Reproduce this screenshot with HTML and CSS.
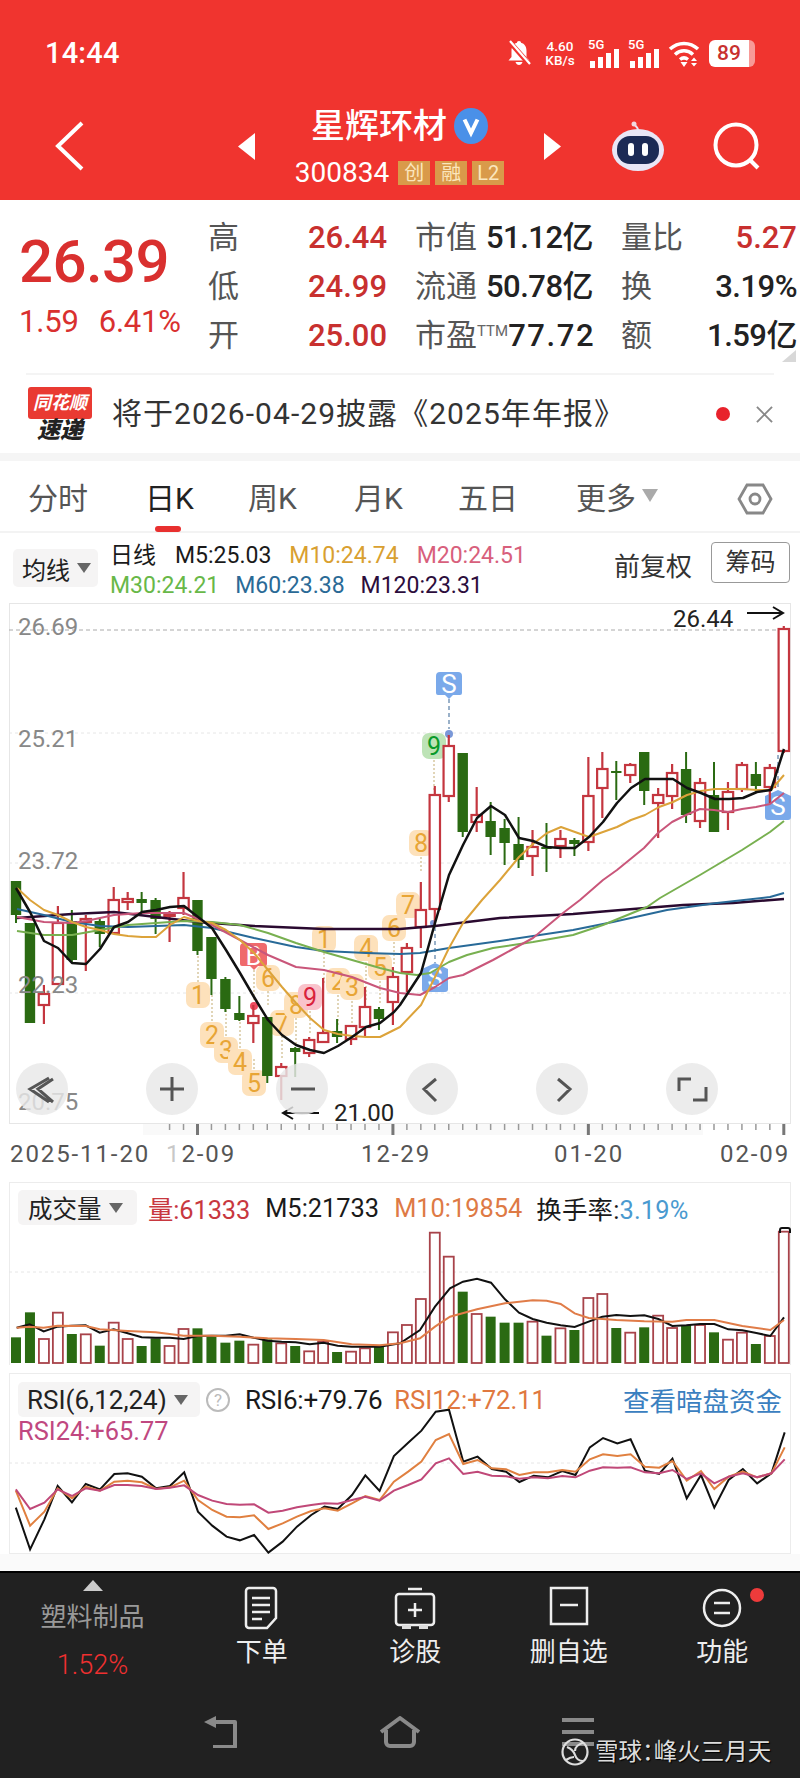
FILE: index.html
```html
<!DOCTYPE html>
<html lang="zh-CN">
<head>
<meta charset="utf-8">
<title>星辉环材</title>
<link rel="stylesheet" href="styles.css">
</head>
<body>
<div class="page">
  <header class="hdr">
    <div class="status">
      <span class="clock">14:44</span>
      <div class="sicons">
        <svg class="i-bell" viewBox="0 0 24 26"><path class="wf" d="M12 1c1.400 0 2 .8 2 1.700 3.800 1 5.500 4 5.500 8V17l3 3.500H1.500L4.500 17v-6.300c0-4 1.700-7 5.500-8C10 1.800 10.600 1 12 1z"/><path class="wf" d="M8.500 22h7c-.5 2-2 3-3.500 3s-3-1-3.500-3z"/><path class="rs" d="M1 0 23 25"/><path class="rs2" d="M3 1 23 24"/></svg>
        <div class="speed"><b>4.60</b><b>KB/s</b></div>
        <svg class="i-sig" viewBox="0 -3 32 30"><text class="g5" x="0" y="8">5G</text><path class="wf" d="M2 20h5v7H2zM10 16h5v11h-5zM18 12h5v15h-5zM26 8h5v19h-5z"/></svg>
        <svg class="i-sig" viewBox="0 -3 32 30"><text class="g5" x="0" y="8">5G</text><path class="wf" d="M2 20h5v7H2zM10 16h5v11h-5zM18 12h5v15h-5zM26 8h5v19h-5z"/></svg>
        <svg class="i-wifi" viewBox="0 0 32 27"><path class="ws" d="M2 9c8-7.500 20-7.500 28 0M7 14.500c5.500-5 12.500-5 18 0M12 19.500c2.500-2 5.500-2 8 0"/><path class="wf" d="M12.500 22h7L16 27zM23 21l3-3.500 3 3.500zM23 23h6l-3 3.500z"/></svg>
        <div class="batt"><span>89</span></div>
      </div>
    </div>
    <div class="nav">
      <svg class="i-back" viewBox="0 0 30 50"><path class="wl" d="M27 2 3 25l24 23"/></svg>
      <div class="titlebox">
        <svg class="tri" viewBox="0 0 17 27"><path class="wf" d="M17 0v27L0 13.500z"/></svg>
        <div class="titlecol">
          <div class="tline"><span class="tname">星辉环材</span>
            <svg class="vb" viewBox="0 0 34 36"><ellipse class="vbg" cx="17" cy="18" rx="17" ry="18"/><path class="vv" d="M10.500 11.500 17 25l6.500-13.500"/></svg>
          </div>
          <div class="cline"><span class="code">300834</span><span class="tag">创</span><span class="tag">融</span><span class="tag">L2</span></div>
        </div>
        <svg class="tri" viewBox="0 0 17 27"><path class="wf" d="M0 0v27l17-13.500z"/></svg>
      </div>
      <svg class="i-robot" viewBox="0 0 54 50">
        <path class="ant" d="M27 9c0-3-2-3-3-5"/><circle class="antd" cx="23" cy="3" r="2.500"/>
        <ellipse class="rhead" cx="27" cy="29" rx="26" ry="21"/>
        <rect class="rface" x="6" y="15" width="42" height="28" rx="13"/>
        <rect class="reye" x="17" y="22" width="6" height="13" rx="3"/>
        <rect class="reye" x="31" y="22" width="6" height="13" rx="3"/>
      </svg>
      <svg class="i-search" viewBox="0 0 48 48"><circle class="ss" cx="23" cy="23" r="20.500"/><path class="ss" d="M37 38l8 8"/></svg>
    </div>
  </header>

  <section class="quote">
    <div class="pricebox">
      <div class="price">26.39</div>
      <div class="chg"><span>1.59</span><span>6.41%</span></div>
    </div>
    <div class="stats">
      <div class="cell"><span class="lb">高</span><span class="red">26.44</span></div>
      <div class="cell"><span class="lb">市值</span><span class="blk">51.12亿</span></div>
      <div class="cell"><span class="lb">量比</span><span class="red">5.27</span></div>
      <div class="cell"><span class="lb">低</span><span class="red">24.99</span></div>
      <div class="cell"><span class="lb">流通</span><span class="blk">50.78亿</span></div>
      <div class="cell"><span class="lb">换</span><span class="blk">3.19%</span></div>
      <div class="cell"><span class="lb">开</span><span class="red">25.00</span></div>
      <div class="cell"><span class="lb">市盈<sup class="ttm">TTM</sup></span><span class="blk wide">77.72</span></div>
      <div class="cell"><span class="lb">额</span><span class="blk">1.59亿</span></div>
    </div>
    <div class="corner"></div>
  </section>

  <section class="banner">
    <div class="logo"><div class="lflag">同花顺</div><div class="lsub">速递</div></div>
    <div class="btext">将于2026-04-29披露《2025年年报》</div>
    <span class="rdot"></span>
    <svg class="bx" viewBox="0 0 18 18"><path class="xl" d="M1 1l16 16M17 1 1 17"/></svg>
  </section>

  <nav class="tabs">
    <span class="tab">分时</span>
    <span class="tab on">日K</span>
    <span class="tab">周K</span>
    <span class="tab">月K</span>
    <span class="tab">五日</span>
    <span class="tab">更多<i class="caret big"></i></span>
    <svg class="hex" viewBox="0 0 36 32"><path class="hs" d="M10 2h16l8 14-8 14H10L2 16z"/><circle class="hs" cx="18" cy="16" r="5"/></svg>
  </nav>

  <section class="legend">
    <div class="chip mchip">均线<i class="caret"></i></div>
    <div class="marows">
      <div class="marow"><span class="dk">日线</span><span class="dk m5">M5:25.03</span><span class="c10">M10:24.74</span><span class="c20">M20:24.51</span></div>
      <div class="marow tight"><span class="c30">M30:24.21</span><span class="c60">M60:23.38</span><span class="c120">M120:23.31</span></div>
    </div>
    <div class="fq">前复权</div>
    <div class="cm">筹码</div>
  </section>

  <svg class="kchart" viewBox="0 600 800 572">
    <rect class="tickband" x="143" y="1123" width="560" height="12"/>
    <rect class="frame" x="9.500" y="603.500" width="781" height="520"/>
    <path class="grid0" d="M9 630H791"/>
    <path class="grid1" d="M9 733H791M9 863H791M9 993H791"/>
    <g id="badges"></g>
    <g class="dots"><path d="M254 970v36M198 982v-28M212 1021v-26M226 1036v-28M240 1048v-26M254 1069v-10M268 991v14M282 1036v24M296 1018v28M310 1011v24M324 953v30M338 995v32M352 1001v24M366 962v40M380 981v24M394 942v22M421 857v14M434 760v32"/></g>
    <g class="sbadge">
      <path class="bb" d="M240 947a4 4 0 0 1 4-4h19a4 4 0 0 1 4 4v17a2 2 0 0 1-2 2h-7l-4 4-4-4h-8a2 2 0 0 1-2-2z"/>
      <text class="bt" x="253.500" y="965">B</text>
      <path class="sb" d="M436 676a4 4 0 0 1 4-4h18a4 4 0 0 1 4 4v17a2 2 0 0 1-2 2h-7l-4 4-4-4h-7a2 2 0 0 1-2-2z"/>
      <text class="st" x="449" y="693">S</text>
      <path class="dl" d="M449 699v30"/><circle class="sdot" cx="449" cy="734" r="4"/>
      <path class="dl" d="M435 927v36"/><circle class="sdot" cx="433" cy="923" r="3"/>
      <path class="sb" d="M422 969l13-6 13 6v20a3 3 0 0 1-3 3h-20a3 3 0 0 1-3-3z"/>
      <text class="st" x="435" y="987">S</text>
      <path class="dl" d="M778 755v34"/>
      <path class="sb" d="M765 796l13-6 13 6v21a3 3 0 0 1-3 3h-20a3 3 0 0 1-3-3z"/>
      <text class="st" x="778" y="815">S</text>
      <circle class="rsd" cx="254" cy="1006" r="4"/>
    </g>
    <g id="candles"></g>
    <g id="malines"></g>
    <g class="ylab">
      <text x="18" y="635">26.69</text>
      <text x="18" y="747">25.21</text>
      <text x="18" y="869">23.72</text>
      <text x="18" y="993">22.23</text>
      <text x="18" y="1110">20.75</text>
    </g>
    <text class="pk" x="673" y="627">26.44</text>
    <path class="arr" d="M747 613h36m-10-6 10 6-10 6"/>
    <text class="pk" x="334" y="1121">21.00</text>
    <path class="arr" d="M319 1113h-36m10-6-10 6 10 6"/>
    <g class="btn">
      <circle cx="42" cy="1089" r="26"/><circle cx="172" cy="1089" r="26"/><circle cx="302" cy="1089" r="26"/>
      <circle cx="432" cy="1089" r="26"/><circle cx="562" cy="1089" r="26"/><circle cx="692" cy="1089" r="26"/>
    </g>
    <path class="bi" d="M49 1078l-19 11 19 13M53 1079l-15 10 15 13M160 1089h24M172 1077v24M291 1089h24M436 1079l-12 10 12 12M558 1079l12 10-12 12M679 1091v-12h12M706 1087v13h-13"/>
    <g id="ticks"></g>
    <g class="xlab">
      <text x="10" y="1162">2025-11-20</text>
      <text x="166" y="1162"><tspan class="pale">1</tspan>2-09</text>
      <text x="361" y="1162">12-29</text>
      <text x="554" y="1162">01-20</text>
      <text x="720" y="1162">02-09</text>
    </g>
  </svg>

  <section class="panel vol">
    <svg class="pchart" viewBox="9 1182 782 183">
      <path class="grid1" d="M9 1272H791"/>
      <g id="vols"></g>
      <g id="vollines"></g>
      <path class="topcap" d="M780 1233v-3a2 2 0 0 1 2-2h6a2 2 0 0 1 2 2v3"/>
    </svg>
    <div class="phead">
      <div class="chip vchip">成交量<i class="caret"></i></div>
      <span class="v1">量:61333</span><span class="dk v2">M5:21733</span><span class="v3">M10:19854</span><span class="dk v4">换手率:<em>3.19%</em></span>
    </div>
  </section>

  <section class="panel rsi">
    <svg class="pchart" viewBox="9 1373 782 181">
      <path class="grid1" d="M9 1463H791"/>
      <g id="rsilines"></g>
    </svg>
    <div class="phead rhead">
      <div class="chip rchip">RSI(6,12,24)<i class="caret"></i></div>
      <span class="qm">?</span>
      <span class="dk r1">RSI6:+79.76</span><span class="r2">RSI12:+72.11</span>
      <span class="rlink">查看暗盘资金</span>
    </div>
    <div class="r3">RSI24:+65.77</div>
  </section>

  <div class="filler"></div>

  <footer class="foot">
    <div class="tools">
      <div class="tool first">
        <i class="uptri"></i>
        <span class="sect">塑料制品</span>
        <span class="pct">1.52%</span>
      </div>
      <div class="tool">
        <svg class="ti" viewBox="0 0 44 44"><path class="tl" d="M9 2h24a3 3 0 0 1 3 3v27l-9 10H9a3 3 0 0 1-3-3V5a3 3 0 0 1 3-3zM12 12h18M12 19h18M12 26h18M12 33h10"/></svg>
        <span class="tlabel">下单</span>
      </div>
      <div class="tool">
        <svg class="ti" viewBox="0 0 44 44"><path class="tl" d="M15 3h14M6 8h32a3 3 0 0 1 3 3v25a3 3 0 0 1-3 3H6a3 3 0 0 1-3-3V11a3 3 0 0 1 3-3zM22 17v14M15 24h14"/><path class="tf" d="M9 39h9v4H9zM26 39h9v4h-9z"/></svg>
        <span class="tlabel">诊股</span>
      </div>
      <div class="tool">
        <svg class="ti" viewBox="0 0 44 44"><path class="tl" d="M4 2h36v36H4zM13 19h18"/></svg>
        <span class="tlabel">删自选</span>
      </div>
      <div class="tool fn">
        <svg class="ti" viewBox="0 0 44 44"><circle class="tl" cx="22" cy="22" r="18"/><path class="tl" d="M14 17h16M14 27h16"/></svg>
        <i class="fdot"></i>
        <span class="tlabel">功能</span>
      </div>
    </div>
    <div class="sysnav">
      <svg class="sn1" viewBox="0 0 36 32"><path class="sl" d="M4 6h27v25H9"/><path class="sf" d="M0 6 12 0v12z"/></svg>
      <svg class="sn2" viewBox="0 0 42 32"><path class="sl" d="M2 16 21 2l19 14M7 14v12a4 4 0 0 0 4 4h20a4 4 0 0 0 4-4V14"/></svg>
      <svg class="sn3" viewBox="0 0 34 28"><path class="sl" d="M1 2h32M1 14h32M1 26h32"/></svg>
    </div>
    <div class="wm">
      <svg class="wmi" viewBox="0 0 28 28"><circle class="wc" cx="14" cy="14" r="12.500"/><path class="wc" d="M6 9c5 2 7 5 8 8s3 6 8 6M22 5c-4 1-8 4-8 8M5 22c3-2 6-3 8-3"/></svg>
      <span>雪球：峰火三月天</span>
    </div>
  </footer>
</div>
<script src="chart.js"></script>
</body>
</html>
```

FILE: styles.css
```css
* { box-sizing: border-box; }
html, body { margin: 0; padding: 0; background: #fff; }
body { font-family: Roboto, "Noto Sans CJK SC", sans-serif; color: #222; }
.page { width: 800px; height: 1778px; display: flex; flex-direction: column; overflow: hidden; }
svg { display: block; flex: none; }

/* header */
.hdr { height: 200px; flex: none; background: #f0342f; color: #fff; padding-top: 36px; }
.status { height: 34px; padding: 0 45px; display: flex; justify-content: space-between; align-items: center; }
.clock { font-size: 29px; font-weight: 500; letter-spacing: .2px; }
.sicons { display: flex; align-items: center; }
.i-bell { width: 24px; height: 26px; margin-right: 11px; }
.wf { fill: #fff; }
.rs { stroke: #f0342f; stroke-width: 5px; }
.rs2 { stroke: #fff; stroke-width: 2.200px; }
.speed { width: 36px; display: flex; flex-direction: column; font-size: 13.500px; line-height: 14px; margin-right: 10px; text-align: center; }
.speed b { font-weight: 500; }
.i-sig { width: 32px; height: 30px; margin-right: 8px; }
.g5 { fill: #fff; font-size: 13px; font-weight: 500; }
.i-wifi { width: 32px; height: 27px; margin-right: 9px; }
.ws { fill: none; stroke: #fff; stroke-width: 3.500px; }
.batt { width: 46px; height: 27px; background: linear-gradient(90deg, #fff 0 40px, rgba(255,255,255,.5) 40px); border-radius: 6px; color: #c8302f; font-size: 21px; font-weight: 500; line-height: 27px; padding-left: 8px; }
.nav { height: 80px; margin-top: 36px; display: flex; align-items: center; }
.i-back { width: 30px; height: 50px; margin-left: 55px; }
.wl { fill: none; stroke: #fff; stroke-width: 4px; }
.titlebox { width: 323px; margin-left: 153px; display: flex; align-items: center; justify-content: space-between; }
.tri { width: 17px; height: 27px; }
.titlecol { display: flex; flex-direction: column; align-items: center; }
.tline { height: 40px; display: flex; align-items: center; gap: 7px; }
.tname { font-size: 34px; line-height: 40px; font-weight: 500; }
.vb { width: 34px; height: 36px; }
.vbg { fill: #4a90e8; }
.vv { fill: none; stroke: #fff; stroke-width: 4px; }
.cline { height: 28px; margin-top: 13px; display: flex; align-items: center; }
.code { font-size: 28px; line-height: 28px; margin-right: 9px; }
.tag { width: 32px; height: 24px; margin-right: 5px; background: #d99a4a; color: #fbe6bd; font-size: 20px; line-height: 24px; text-align: center; }
.tag:last-child { margin-right: 0; }
.i-robot { width: 54px; height: 50px; margin-left: 50px; }
.ant { fill: none; stroke: #e8e4f4; stroke-width: 2px; }
.antd { fill: #f2d8e0; }
.rhead { fill: #e9e6f6; }
.rface { fill: #1c2a55; }
.reye { fill: #fff; }
.i-search { width: 48px; height: 48px; margin-left: 48px; }
.ss { fill: none; stroke: #fff; stroke-width: 4px; }

/* quote */
.quote { height: 173px; flex: none; display: flex; position: relative; }
.pricebox { width: 208px; padding: 27px 0 0 19px; }
.price { font-size: 60px; line-height: 70px; font-weight: 500; color: #d9302f; letter-spacing: -.6px; }
.chg { display: flex; gap: 20px; margin-top: 7px; font-size: 31px; line-height: 36px; color: #d9302f; letter-spacing: -.2px; }
.stats { width: 590px; padding-top: 13px; display: grid; grid-template-columns: 179px 178px 176px; column-gap: 28px; grid-auto-rows: 49px; }
.cell { display: flex; justify-content: space-between; align-items: center; font-size: 31px; line-height: 49px; }
.lb { color: #555; white-space: nowrap; }
.red { color: #c8302f; font-weight: 500; }
.blk { color: #222; font-weight: 500; letter-spacing: -.5px; }
.blk.wide { letter-spacing: 1.600px; }
.ttm { font-size: 15px; line-height: 0; vertical-align: 10px; color: #666; }
.corner { position: absolute; right: 4px; top: 150px; width: 0; height: 0; border-left: 14px solid transparent; border-bottom: 12px solid #d8d8d8; }

/* banner */
.banner { height: 80px; flex: none; margin: 0 26px; border-top: 2px solid #f4f4f4; display: flex; align-items: center; padding-left: 2px; }
.logo { width: 64px; height: 54px; flex: none; }
.lflag { height: 32px; background: #e93a32; border-radius: 3px; color: #fff; font-size: 18px; font-weight: 700; font-style: italic; text-align: center; line-height: 31px; }
.lsub { font-size: 23px; font-weight: 900; font-style: italic; line-height: 24px; text-align: center; color: #222; }
.btext { margin-left: 20px; font-size: 30px; line-height: 40px; color: #333; letter-spacing: 1.050px; flex: 1; white-space: nowrap; }
.rdot { width: 14px; height: 14px; border-radius: 50%; background: #e8222c; }
.bx { width: 17px; height: 17px; margin: 0 1px 0 26px; }
.xl { stroke: #888; stroke-width: 2px; fill: none; }

/* tabs */
.tabs { height: 80px; flex: none; border-top: 8px solid #f5f5f5; border-bottom: 2px solid #f3f3f3; padding: 5px 0 0 28px; display: grid; grid-template-columns: 117px 103px 106px 104px 118px 161px 40px; align-items: center; font-size: 30px; color: #555; }
.tab { white-space: nowrap; position: relative; line-height: 40px; }
.tab.on { color: #222; }
.tab.on::after { content: ""; position: absolute; left: 10px; top: 47px; width: 26px; height: 6px; border-radius: 3px; background: #e8302f; }
.caret { display: inline-block; width: 0; height: 0; border-left: 7px solid transparent; border-right: 7px solid transparent; border-top: 10px solid #666; margin-left: 7px; vertical-align: 4px; }
.caret.big { border-left-width: 8px; border-right-width: 8px; border-top-width: 13px; border-top-color: #aaa; margin-left: 6px; vertical-align: 7px; }
.hex { width: 36px; height: 32px; }
.hs { fill: none; stroke: #888; stroke-width: 2.800px; }

/* legend */
.legend { height: 67px; flex: none; display: flex; align-items: flex-start; padding-left: 13px; }
.chip { background: #f5f4f4; border-radius: 5px; display: flex; align-items: center; color: #222; white-space: nowrap; }
.mchip { width: 85px; height: 38px; margin-top: 16px; padding-left: 9px; font-size: 24px; }
.marows { margin: 8px 0 0 12px; width: 504px; }
.marow { display: flex; gap: 18px; height: 29.500px; line-height: 29.500px; font-size: 23px; white-space: nowrap; }
.marow.tight { gap: 16px; }
.m5 { margin-left: 1px; }
.dk { color: #1a1a1a; }
.c10 { color: #d9a030; }
.c20 { color: #d8607c; }
.c30 { color: #68b848; }
.c60 { color: #2a6a96; }
.c120 { color: #2c0d3c; }
.fq { width: 97px; margin-top: 16px; font-size: 26px; line-height: 36px; color: #333; }
.cm { width: 79px; height: 41px; margin-top: 9px; border: 1px solid #999; border-radius: 4px; font-size: 25px; line-height: 39px; text-align: center; color: #333; }

/* K chart */
.kchart { width: 800px; height: 572px; }
.frame { fill: none; stroke: #e6e6e6; }
.tickband { fill: #f9f9f9; }
.grid0 { stroke: #aaa; stroke-width: 1px; stroke-dasharray: 4 3; fill: none; }
.grid1 { stroke: #e6e6e6; stroke-width: 1px; stroke-dasharray: 3 3; fill: none; }
.dots path { stroke: #d8c8a0; stroke-width: 1.500px; stroke-dasharray: 2 2; fill: none; }
.td { fill: #fde1bb; }
.tdt { fill: #e8a535; font-size: 25px; text-anchor: middle; }
.td9 { fill: #f9c3cb; }
.td9t { fill: #d9223c; font-size: 25px; text-anchor: middle; }
.tdg { fill: #bde3b6; }
.tdgt { fill: #0a9a2a; font-size: 25px; text-anchor: middle; }
.bb { fill: #ef6a6c; }
.bt { fill: #fff; font-size: 26px; text-anchor: middle; }
.sb { fill: #7aa9ea; }
.st { fill: #fff; font-size: 26px; text-anchor: middle; }
.dl { stroke: #7a98b8; stroke-width: 1.500px; stroke-dasharray: 4 3; fill: none; }
.sdot { fill: #7a98d8; }
.rsd { fill: #ee4a60; }
.wk-r { stroke: #c4363f; stroke-width: 2.200px; }
.wk-g { stroke: #2a6a12; stroke-width: 2px; }
.bd-r { fill: #fff; stroke: #c4363f; stroke-width: 2.200px; }
.bd-g { fill: #2a6a12; }
.ma { fill: none; stroke-width: 2px; stroke-linejoin: round; }
.ma5 { stroke: #111; stroke-width: 2.500px; }
.ma10 { stroke: #dca33a; }
.ma20 { stroke: #c9567a; }
.ma30 { stroke: #78b050; }
.ma60 { stroke: #286a98; }
.ma120 { stroke: #2a0a30; stroke-width: 2.500px; }
.ylab text { fill: #888; font-size: 24px; }
.pk { fill: #222; font-size: 24px; }
.arr { fill: none; stroke: #111; stroke-width: 2px; }
.btn circle { fill: rgba(232,232,232,.82); }
.bi { fill: none; stroke: #555; stroke-width: 3px; }
.tk { stroke: #999; stroke-width: 1.500px; }
.tk2 { stroke: #777; stroke-width: 3px; }
.xlab text { fill: #555; font-size: 24px; letter-spacing: 1.900px; }
.pale { fill: #c8c8c8; }

/* sub panels */
.panel { margin: 0 9px; width: 782px; flex: none; position: relative; box-shadow: inset 1px 1px 0 #ececec, inset -1px 0 0 #ececec; }
.vol { height: 183px; margin-top: 10px; padding-top: 8px; }
.rsi { height: 181px; margin-top: 8px; padding-top: 9px; box-shadow: inset 1px 1px 0 #ececec, inset -1px -1px 0 #ececec; }
.pchart { position: absolute; left: 0; top: 0; width: 782px; height: 100%; }
.phead { position: relative; display: flex; align-items: center; height: 35px; padding-left: 9px; font-size: 25.400px; white-space: nowrap; }
.vchip { width: 119px; height: 35px; padding-left: 10px; font-size: 24.500px; }
.v1 { margin-left: 11px; color: #c8383f; letter-spacing: -.1px; }
.v2 { margin-left: 15px; }
.v3 { margin-left: 15px; color: #de7a45; }
.v4 { margin-left: 14px; letter-spacing: .2px; }
.v4 em { font-style: normal; color: #4a9ad0; }
.vb-r { fill: #fff; stroke: #a8434a; stroke-width: 1.800px; }
.vb-g { fill: #2a6a12; }
.vl5 { fill: none; stroke: #111; stroke-width: 2px; }
.vl10 { fill: none; stroke: #e07c48; stroke-width: 2px; }
.topcap { fill: none; stroke: #111; stroke-width: 2px; }
.rchip { width: 182px; height: 35px; padding-left: 9px; font-size: 26px; }
.qm { width: 24px; height: 24px; margin-left: 6px; border: 2px solid #bbb; border-radius: 50%; color: #bbb; font-size: 17px; line-height: 20px; text-align: center; }
.r1 { margin-left: 15px; font-size: 26px; letter-spacing: -.2px; }
.r2 { margin-left: 12px; font-size: 25.600px; color: #e07840; }
.rlink { margin-left: auto; margin-right: 9px; font-size: 26.500px; color: #3a80c0; }
.r3 { position: relative; padding-left: 9px; font-size: 25.400px; line-height: 28px; color: #c04880; white-space: nowrap; }
.rs6 { fill: none; stroke: #111; stroke-width: 2px; }
.rs12 { fill: none; stroke: #e08040; stroke-width: 2px; }
.rs24 { fill: none; stroke: #c04878; stroke-width: 2px; }

.filler { flex: 1; background: #fafafa; }

/* footer */
.foot { height: 207px; flex: none; background: #212121; border-top: 2px solid #000; position: relative; }
.tools { display: grid; grid-template-columns: 185px repeat(4, 153.500px); height: 143px; }
.tool { display: flex; flex-direction: column; align-items: center; padding-top: 13px; position: relative; }
.ti { width: 44px; height: 44px; }
.tl { fill: none; stroke: #eee; stroke-width: 2.500px; }
.tf { fill: #ddd; }
.tlabel { font-size: 26px; line-height: 34px; margin-top: 5px; color: #eee; }
.tool.first { padding-top: 7px; }
.uptri { width: 0; height: 0; border-left: 10px solid transparent; border-right: 10px solid transparent; border-bottom: 11px solid #ccc; }
.sect { font-size: 26px; line-height: 36px; margin-top: 8px; color: #999; }
.pct { font-size: 27px; line-height: 36px; margin-top: 12px; color: #f03030; font-weight: 300; }
.fdot { position: absolute; left: 104px; top: 15px; width: 14px; height: 14px; border-radius: 50%; background: #ee3b3b; }
.sysnav { display: flex; align-items: flex-start; padding-left: 204px; }
.sn1 { width: 36px; height: 32px; }
.sn2 { width: 42px; height: 32px; margin-left: 139px; }
.sn3 { width: 34px; height: 28px; margin: 2px 0 0 140px; }
.sl { fill: none; stroke: #8a8a8a; stroke-width: 4px; stroke-linejoin: round; }
.sf { fill: #8a8a8a; }
.wm { position: absolute; left: 561px; top: 164px; display: flex; align-items: center; gap: 6px; color: #ddd; font-size: 23.500px; line-height: 30px; font-feature-settings: "palt"; text-shadow: 1px 1px 1px #000; white-space: nowrap; }
.wmi { width: 28px; height: 28px; }
.wc { fill: none; stroke: #ddd; stroke-width: 2.200px; }
```

FILE: chart.js
```js
var NS = "http://www.w3.org/2000/svg";
function el(parent, tag, attrs, text) {
  var n = document.createElementNS(NS, tag);
  for (var k in attrs) n.setAttribute(k, attrs[k]);
  if (text !== undefined) n.textContent = text;
  parent.appendChild(n);
  return n;
}
function X(i) { return 16 + 13.96 * i; }

// type, body top, body bottom, wick top, wick bottom
var candles = [
  ["g",881,915,881,923],["g",923,1023,923,1023],["r",994,1005,985,1024],["r",923,984,906,984],
  ["g",921,960,910,963],["r",919,922,915,971],["g",921,934,918,947],["r",900,933,887,934],
  ["r",899,902,892,910],["g",899,903,892,912],["g",900,919,898,934],["r",914,916,911,942],
  ["r",898,908,872,915],["g",900,951,900,955],["g",937,979,937,995],["g",979,1009,977,1012],
  ["g",1013,1020,996,1021],["r",1016,1023,1005,1043],["g",1017,1076,1017,1083],["r",1067,1076,1063,1100],
  ["g",1048,1052,1047,1077],["r",1040,1053,1037,1057],["r",1033,1042,978,1042],["g",1031,1037,1019,1043],
  ["r",1026,1039,1025,1045],["r",1007,1027,987,1037],["g",1009,1019,1007,1030],["r",977,1002,967,1025],
  ["r",948,972,943,992],["r",910,927,882,948],["r",795,909,786,927],["r",746,796,735,802],
  ["g",753,832,753,837],["r",815,822,787,832],["g",821,837,802,855],["g",828,843,819,865],
  ["g",844,860,817,868],["r",847,856,830,876],["g",847,849,823,872],["r",839,846,830,858],
  ["g",840,844,838,856],["r",796,842,757,851],["r",769,788,752,818],["g",771,773,761,800],
  ["r",765,775,763,783],["g",752,791,752,805],["r",795,803,788,838],["r",773,796,764,809],
  ["g",769,815,752,823],["r",783,821,778,828],["g",795,832,762,832],["r",792,812,782,830],
  ["r",765,789,762,792],["g",774,786,762,792],["r",768,787,764,803],["r",629,751,626,753]
];
var cg = document.getElementById("candles");
candles.forEach(function (c, i) {
  var x = X(i);
  el(cg, "line", { "class": "wk-" + c[0], x1: x, x2: x, y1: c[3], y2: c[4] });
  el(cg, "rect", { "class": "bd-" + c[0], x: x - 5.2, y: c[1], width: 10.4, height: c[2] - c[1] });
});

// Moving averages
function line(g, cls, pts) {
  el(g, "polyline", { "class": cls, points: pts.map(function (p) { return p[0] + "," + p[1]; }).join(" ") });
}
var mg = document.getElementById("malines");
line(mg, "ma ma120", [[17,918],[72,914],[114,912],[156,917],[198,922],[254,926],[324,929],[400,929],[435,926],[500,918],[573,914],[633,909],[683,905],[733,903],[784,899]]);
line(mg, "ma ma60", [[17,909],[44,915],[72,922],[100,926],[128,927],[156,926],[184,925],[212,928],[254,938],[296,947],[324,951],[366,953],[400,954],[420,953],[449,948],[500,941],[573,930],[613,922],[667,910],[717,903],[770,897],[784,893]]);
line(mg, "ma ma30", [[17,931],[44,935],[72,935],[100,930],[128,925],[156,923],[184,921],[212,922],[240,925],[268,933],[296,943],[324,952],[352,960],[380,968],[400,973],[417,975],[430,973],[449,962],[467,955],[493,948],[533,942],[573,935],[603,925],[647,907],[660,898],[700,875],[742,850],[770,832],[784,821]]);
line(mg, "ma ma20", [[17,917],[44,922],[72,923],[86,921],[114,915],[142,913],[184,913],[212,925],[240,940],[268,955],[296,967],[324,970],[352,977],[380,988],[400,993],[420,995],[435,987],[449,978],[463,975],[493,960],[533,938],[563,913],[580,900],[603,880],[617,870],[644,848],[658,833],[672,822],[686,815],[700,809],[714,810],[728,812],[742,809],[756,807],[770,804],[784,793]]);
line(mg, "ma ma10", [[17,888],[30,900],[44,910],[58,915],[72,922],[86,927],[100,930],[114,934],[128,936],[142,937],[156,937],[170,925],[184,917],[198,921],[212,923],[226,930],[240,940],[254,953],[268,970],[282,987],[296,1003],[310,1018],[324,1030],[338,1034],[352,1036],[366,1037],[380,1037],[394,1030],[400,1027],[421,1005],[435,977],[449,948],[463,923],[482,900],[500,880],[519,857],[533,844],[547,833],[561,827],[575,832],[589,837],[603,832],[617,827],[631,820],[645,815],[659,807],[673,802],[687,795],[701,791],[715,789],[729,789],[743,789],[757,790],[771,790],[784,775]]);
line(mg, "ma ma5", [[16,888],[30,912],[44,941],[58,948],[72,963],[86,964],[100,949],[114,927],[128,922],[142,912],[156,910],[170,907],[184,906],[198,917],[212,928],[226,950],[240,973],[254,997],[268,1020],[282,1035],[296,1045],[310,1050],[324,1053],[338,1046],[352,1037],[366,1027],[380,1023],[394,1012],[400,1005],[421,973],[435,923],[449,875],[463,845],[477,818],[491,806],[505,815],[519,838],[533,841],[547,847],[561,848],[575,848],[589,837],[603,822],[617,803],[631,788],[645,779],[659,779],[673,779],[687,788],[701,793],[715,799],[729,799],[743,798],[757,792],[771,790],[784,749]]);

// TD sequence badges: label, x, y, style
var tds = [
  ["1",198,995,""],["2",212,1035,""],["3",226,1050,""],["4",240,1062,""],["5",254,1083,""],
  ["6",268,978,""],["7",282,1023,""],["8",296,1005,""],["9",310,997,"9"],
  ["1",324,939,""],["2",338,981,""],["3",352,987,""],["4",366,948,""],["5",380,967,""],
  ["6",394,928,""],["7",408,905,""],["8",421,843,""],["9",434,746,"g"]
];
var bg = document.getElementById("badges");
tds.forEach(function (t) {
  el(bg, "rect", { "class": "td" + t[3], x: t[1] - 12, y: t[2] - 13, width: 24, height: 26, rx: 7 });
  el(bg, "text", { "class": "td" + t[3] + "t", x: t[1], y: t[2] + 9 }, t[0]);
});

// Date axis ticks
var tg = document.getElementById("ticks");
for (var i = 11; i < 56; i++) {
  var tall = i === 13 || i === 27 || i === 41 || i === 55;
  el(tg, "line", { "class": tall ? "tk2" : "tk", x1: X(i), x2: X(i), y1: 1124, y2: tall ? 1135 : 1130 });
}

// Volume bars: top in zoomed units
var volTops = [502,427,507,428,492,493,527,458,507,528,505,528,477,475,500,518,512,524,508,520,528,544,515,546,545,535,530,487,465,387,188,260,365,432,440,458,458,455,497,475,480,384,372,474,488,472,437,474,465,465,487,509,488,522,498,185];
var vg = document.getElementById("vols");
volTops.forEach(function (t, i) {
  var y = 1170 + t / 3, r = candles[i][0] === "r";
  el(vg, "rect", { "class": r ? "vb-r" : "vb-g", x: X(i) - 5, y: y, width: 10, height: 1363 - y });
});
function conv(a, b, ox) { return a.map(function (p) { return [ox + p[0] / 3, 1170 + p[1] / 3]; }); }
var vl = document.getElementById("vollines");
var v5 = conv([[50,473],[89,463],[131,484],[173,470],[215,467],[257,466],[299,488],[341,478],[383,490],[425,502],[467,503],[509,503],[551,507],[593,498],[635,497],[677,497],[719,493],[761,503],[803,512],[845,515],[887,517],[929,523],[971,518],[1013,527],[1055,530],[1097,530],[1139,530],[1200,520]],0,0)
  .concat(conv([[60,480],[105,410],[150,355],[189,335],[231,326],[273,338],[315,388],[357,428],[398,447],[440,458],[482,466],[524,471],[566,455],[607,440],[649,435],[691,438],[733,436],[775,447],[817,468],[859,466],[901,462],[943,462],[985,478],[1027,481],[1069,489],[1111,498],[1152,442]],0,400));
var v10 = conv([[50,473],[89,470],[131,473],[173,467],[257,468],[299,478],[383,483],[467,487],[551,497],[635,497],[719,500],[803,505],[887,507],[971,510],[1055,523],[1139,526],[1200,520]],0,0)
  .concat(conv([[60,505],[105,470],[150,440],[231,418],[315,400],[398,391],[440,392],[482,402],[524,430],[566,444],[649,450],[733,454],[817,455],[859,450],[943,450],[1027,468],[1111,480],[1152,450]],0,400));
line(vl, "vl5", v5);
line(vl, "vl10", v10);

// RSI
var rx = [31,59,87,113,141,168,196,224,250,278,306,333,361,388,416,444,470,498,526,554,582,610,636,662,690,716,744,772,800,826,854,880,908,936,964,992,1018,1046,1074,1102,1128,1156,1182,1210,1236,1264,1292,1318,1346,1374,1400,1428,1456,1484,1512,1538];
var r6 = [443,568,478,378,427,372,388,342,340,350,385,378,337,455,497,530,541,525,578,545,500,465,440,447,405,346,393,288,248,212,155,149,305,290,327,335,366,347,352,333,345,262,234,250,238,332,342,296,415,345,443,360,327,370,340,217];
var r12 = [392,497,455,385,415,380,392,365,362,367,387,382,362,420,450,470,472,466,507,490,470,453,445,452,430,408,420,365,335,305,240,222,312,300,325,328,345,337,337,330,335,298,283,288,283,320,323,303,362,333,387,350,335,352,340,262];
var r24 = [388,447,428,388,408,385,392,375,375,378,387,383,376,405,422,432,434,433,458,452,442,435,430,431,420,410,422,392,375,358,310,295,342,335,347,349,356,352,355,348,352,332,322,323,322,337,340,330,357,340,370,350,340,352,340,298];
function rsi(v) { return v.map(function (y, i) { return [rx[i] / 1.96, 1360 + y / 3]; }); }
var rg = document.getElementById("rsilines");
line(rg, "rs6", rsi(r6));
line(rg, "rs12", rsi(r12));
line(rg, "rs24", rsi(r24));
```
